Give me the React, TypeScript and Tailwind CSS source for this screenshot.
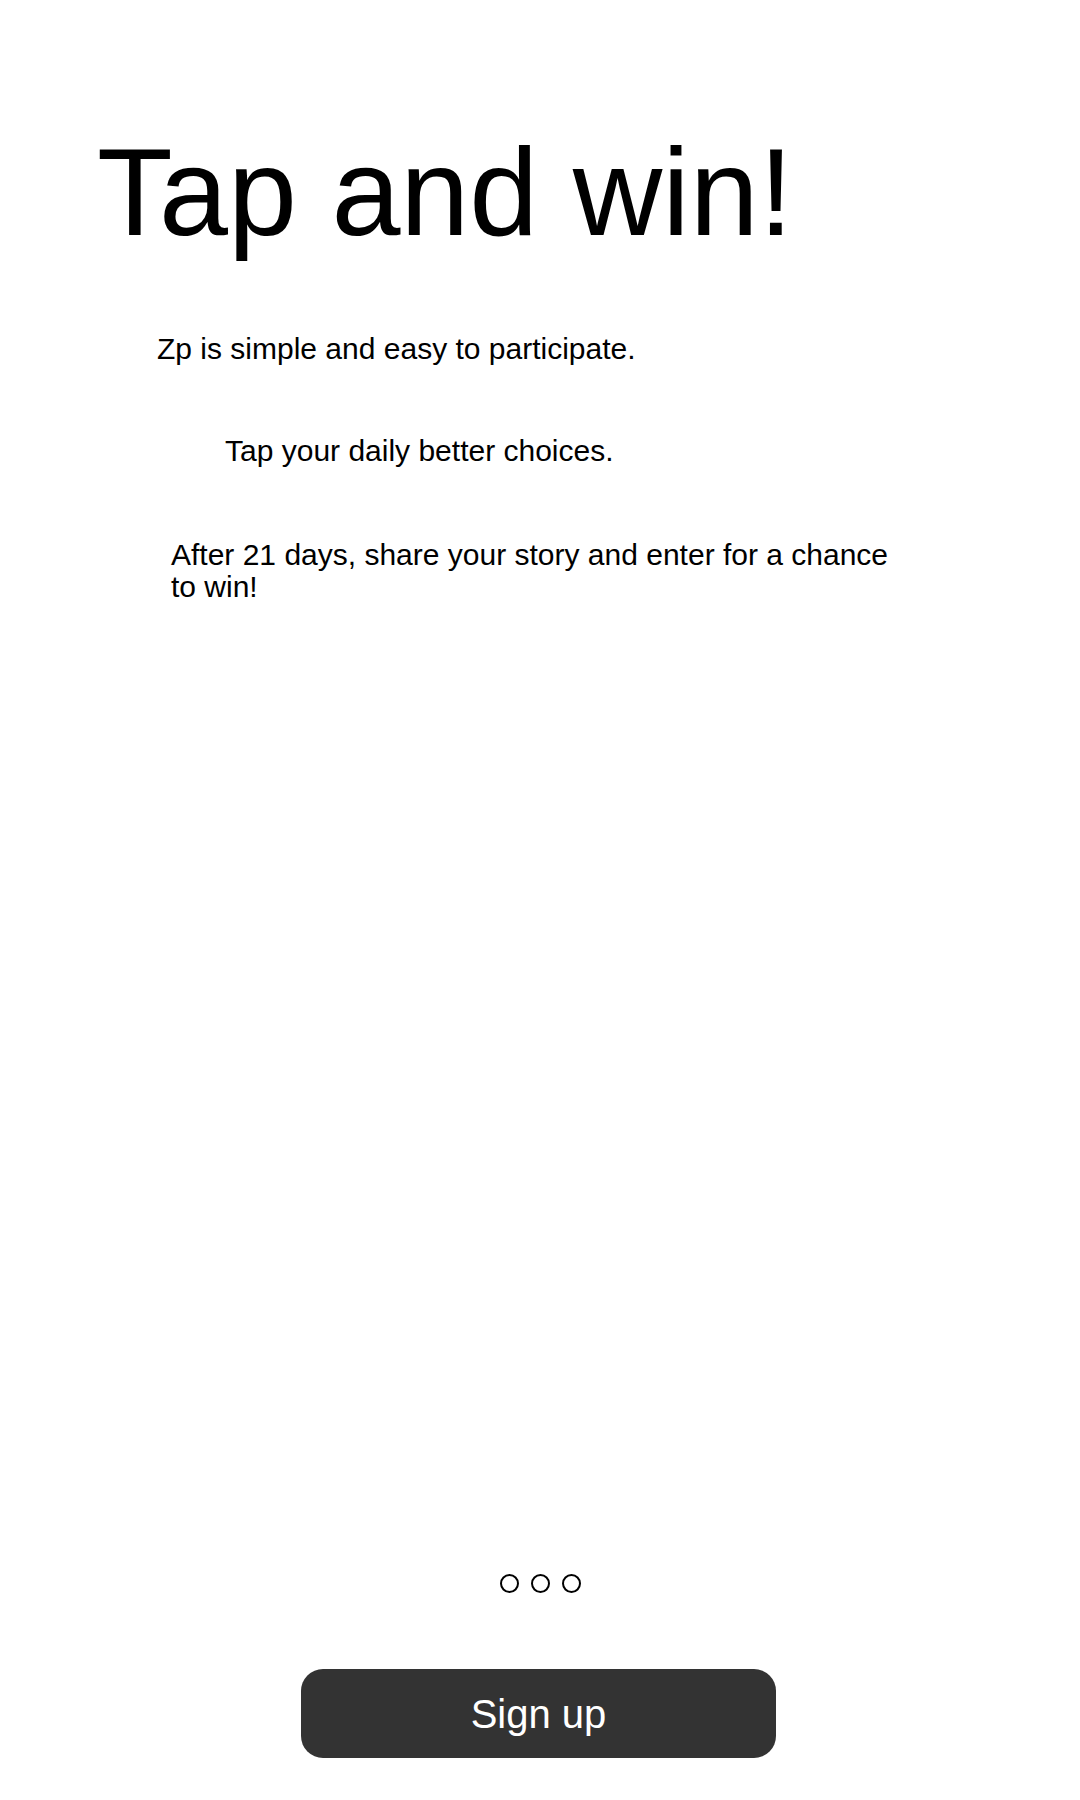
// Onboarding slide: "Tap and win!" with the pager dots and the sign-up button.
const font = "font-['Liberation_Sans',Arial,sans-serif]";

function PagerDots({ count }: { count: number }) {
  return (
    <div className="flex justify-center gap-[12px]">
      {Array.from({ length: count }).map((_, i) => (
        <span key={i} className="block h-[19px] w-[19px] rounded-full border-[2.5px] border-black" />
      ))}
    </div>
  );
}

export default function App() {
  return (
    <div className={`${font} flex h-[1800px] w-[1080px] flex-col bg-white text-black`}>
      <h1 className="ml-[97px] mt-[130px] text-[124px] leading-[124px] font-normal">Tap and win!</h1>

      <p className="ml-[157px] mt-[79px] text-[30px] leading-[32px]">
        Zp is simple and easy to participate.
      </p>

      <p className="ml-[225px] mt-[70px] text-[30px] leading-[32px]">
        Tap your daily better choices.
      </p>

      <p className="ml-[171px] mt-[72px] w-[735px] text-[30px] leading-[32px]">
        After 21 days, share your story and enter for a chance to win!
      </p>

      <div className="flex-1" />

      <PagerDots count={3} />

      <div className="mt-[76px] mb-[42px] flex justify-center pr-[3px]">
        <button className="h-[89px] w-[475px] rounded-[22px] bg-[#333333] text-[40px] text-white">
          Sign up
        </button>
      </div>
    </div>
  );
}
